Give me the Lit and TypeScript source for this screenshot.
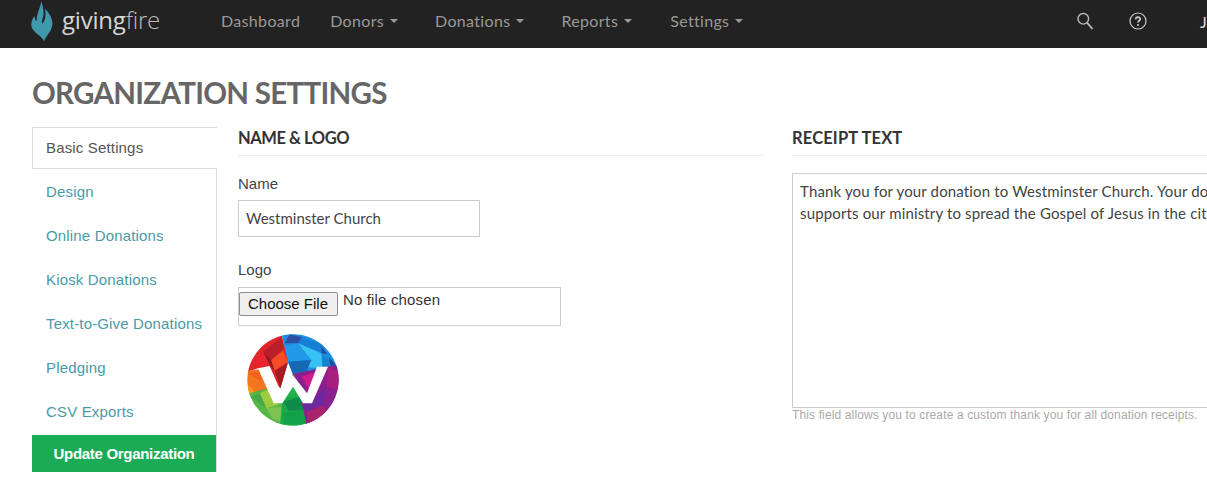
import { LitElement, html, css, svg } from "lit";
import { customElement } from "lit/decorators.js";

/* Logo facets, given in a 300x300 working space (see viewBox). */
const facets: [string, string][] = [
  // blue field
  ["#1a8fe0", "115,10 300,0 300,120 150,135 135,95"],
  ["#2c4fa6", "125,40 140,12 178,22 165,40"],
  ["#1780d6", "178,22 235,42 235,70 165,40"],
  ["#2199e6", "120,50 165,40 205,90 135,95"],
  ["#38c2f4", "165,40 235,70 238,115 195,112 205,90"],
  ["#1f4f9e", "235,45 252,72 235,70"],
  ["#1a80cc", "238,78 275,100 255,112 238,112"],
  ["#1a4fa0", "258,80 282,112 262,106"],
  ["#1668b4", "135,95 205,90 190,125 150,132"],
  // red field
  ["#e0262a", "0,0 115,10 135,95 112,175 45,115 0,130"],
  ["#b81f28", "60,65 115,22 122,55 85,90"],
  ["#8e1a22", "60,65 85,90 95,125 80,105"],
  ["#f64c24", "85,90 120,62 135,95 95,122"],
  ["#a31c24", "95,122 135,98 112,175"],
  ["#e8232e", "25,90 60,65 80,105 45,115"],
  // orange
  ["#f4761e", "0,125 48,118 92,210 0,200"],
  ["#f99a22", "15,165 42,192 10,192"],
  ["#f25f1e", "15,130 48,124 58,155"],
  // left green
  ["#58b548", "0,195 75,175 118,210 125,300 60,300"],
  ["#9ecb3e", "50,190 75,178 105,225 70,235"],
  ["#43a947", "22,200 50,190 70,235"],
  ["#7dc450", "70,235 115,230 125,278 88,266"],
  // centre green
  ["#1aa94a", "150,132 176,215 195,300 110,300 118,208"],
  ["#20b24c", "150,135 170,198 122,205"],
  ["#0d8b48", "120,215 175,200 182,240 138,242"],
  ["#12a048", "120,250 185,240 192,282 125,282"],
  // purple field
  ["#8a1f90", "150,132 300,100 300,190 250,262 190,282 176,215"],
  ["#d01a8c", "175,140 226,122 205,190"],
  ["#a72080", "255,110 290,124 286,180 250,170"],
  ["#6b2a9e", "176,215 205,215 250,170 240,225 190,245"],
  ["#a9246c", "190,245 240,228 258,262 195,280"],
];

@customElement("app-root")
export class AppRoot extends LitElement {
  static styles = css`
    :host {
      display: block;
      width: 1207px;
      height: 503px;
      overflow: hidden;
      background: #fff;
      font-family: "Liberation Sans", Arial, sans-serif;
      font-size: 15px;
      color: #444;
    }
    .top {
      height: 48px;
      background: #222;
      display: flex;
      align-items: center;
      position: relative;
      overflow: hidden;
    }
    .brand {
      display: flex;
      align-items: center;
      margin-left: 31px;
      width: 190px;
      flex: none;
      height: 48px;
    }
    .flame { display: block; margin-top: -6px; }
    .word {
      margin-left: 9px;
      margin-top: -10px;
      font: 400 24px "Open Sans", sans-serif;
      letter-spacing: -0.2px;
      color: #d6d6d6;
    }
    .word span { font-weight: 300; color: #bdbdbd; }
    .nav {
      display: flex;
      align-items: center;
      flex: 1;
      font: 400 16px Lato, sans-serif;
      letter-spacing: 0.33px;
      color: #999;
      margin-top: -8px;
    }
    .nav a { display: flex; align-items: center; flex: none; }
    .caret {
      margin-left: 6px;
      margin-top: 2px;
      border-left: 4.5px solid transparent;
      border-right: 4.5px solid transparent;
      border-top: 4px solid #999;
    }
    .icons { display: flex; align-items: center; flex: none; margin-top: -6px; }
    .icons svg { display: block; }
    .help-icon { margin-left: 35px; }
    .user { font: 400 16px Lato, sans-serif; color: #ddd; margin-left: 53px; width: 7px; }
    h1 {
      margin: 0;
      padding: 27px 0 0 32px;
      height: 52px;
      font: 700 29.5px/36px Lato, sans-serif;
      letter-spacing: -0.72px;
      color: #666;
      white-space: nowrap;
    }
    .grid {
      display: grid;
      grid-template-columns: 185px 526px 526px;
      column-gap: 21px;
      padding-left: 32px;
      width: max-content;
    }
    .side { display: flex; flex-direction: column; }
    .tab {
      height: 44px;
      flex: none;
      box-sizing: border-box;
      padding-left: 14px;
      display: flex;
      align-items: center;
      color: #4a9aa8;
      letter-spacing: 0.16px;
      border-right: 1px solid #ddd;
    }
    .tab.active {
      height: 42px;
      padding-bottom: 2px;
      color: #555;
      border: 1px solid #ddd;
      border-right: 0;
      padding-left: 13px;
    }
    .tab.last { height: 47px; padding-bottom: 3px; }
    .save {
      height: 37px;
      width: 185px;
      box-sizing: border-box;
      background: #1aab54;
      color: #fff;
      font: 700 15px "Liberation Sans", Arial, sans-serif;
      display: flex;
      align-items: center;
      justify-content: center;
      border: 0;
      border-right: 1px solid #ddd;
      padding: 0;
      margin-top: -1px;
      letter-spacing: -0.3px;
    }
    h2 {
      margin: 0;
      height: 28px;
      font: 700 16.5px/22px Lato, sans-serif;
      color: #333;
      border-bottom: 1px solid #eee;
    }
    .h-name { letter-spacing: -0.45px; }
    .h-receipt { letter-spacing: 0.15px; }
    label { display: block; line-height: 18px; color: #444; }
    .f-name { margin-top: 19px; }
    .input {
      box-sizing: border-box;
      width: 242px;
      height: 37px;
      margin-top: 7px;
      border: 1px solid #ccc;
      padding: 0 7px 2px 7px;
      display: block;
      font: 400 15px Lato, sans-serif;
      color: #444;
      outline: none;
    }
    .f-logo { margin-top: 24px; }
    .file {
      box-sizing: border-box;
      width: 323px;
      height: 39px;
      margin-top: 8px;
      border: 1px solid #ccc;
      display: flex;
      align-items: flex-start;
      padding: 4px 0 0 0;
    }
    .file button {
      box-sizing: border-box;
      width: 99px;
      height: 24px;
      padding: 0 1px 2px 0;
      font: 400 15px "Liberation Sans", Arial, sans-serif;
      color: #111;
      background: #efefef;
      border: 1px solid #8f8f8f;
      border-radius: 2px;
    }
    .file span {
      margin: -1px 0 0 5px;
      line-height: 17px;
      color: #333;
      font-size: 15px;
      letter-spacing: 0.15px;
    }
    .logo { display: block; margin: 8px 0 0 9px; filter: blur(0.4px); }
    .receipt { margin-left: 7px; }
    textarea {
      display: block;
      box-sizing: border-box;
      width: 526px;
      height: 235px;
      margin-top: 17px;
      border: 1px solid #ccc;
      padding: 6px 7px;
      font: 400 15px/22px Lato, sans-serif;
      letter-spacing: 0.15px;
      color: #444;
      resize: none;
      outline: none;
      overflow: hidden;
      white-space: pre;
    }
    .help { font-size: 12px; line-height: 14px; letter-spacing: 0.13px; color: #aaa; white-space: nowrap; }
  `;

  render() {
    const items: [string, number, boolean][] = [
      ["Dashboard", 30, false],
      ["Donors", 37, true],
      ["Donations", 37, true],
      ["Reports", 38, true],
      ["Settings", 0, true],
    ];
    return html`
      <header class="top">
        <div class="brand">
          <svg class="flame" width="22" height="42" viewBox="16 0 66 126">
            <path fill="#3f98ab" d="M47 3C50 18 56 28 53 48C50 58 48 64 50 72C58 62 62 50 58 26C70 38 82 55 80 75C78 95 62 105 55 124C48 108 28 100 19 85C14 72 18 60 26 48C28 58 30 62 33 64C32 42 44 25 47 3Z"/>
          </svg>
          <div class="word">giving<span>fire</span></div>
        </div>
        <nav class="nav">
          ${items.map(
            ([t, g, c]) => html`<a style="margin-right:${g}px">${t}${c ? html`<i class="caret"></i>` : ""}</a>`
          )}
        </nav>
        <div class="icons">
          <svg width="17" height="18" viewBox="0 0 17 18" fill="none" stroke="#bbb">
            <circle cx="6.300" cy="6.800" r="5.300" stroke-width="1.400"/>
            <path d="M10.200 10.800L15.500 17" stroke-width="1.800"/>
          </svg>
          <svg class="help-icon" width="18" height="18" viewBox="0 0 18 18" fill="none">
            <circle cx="9" cy="9" r="8" stroke="#ccc" stroke-width="1.200"/>
            <path d="M6.800 7.200C6.800 4.400 11.200 4.400 11.200 7.100C11.200 8.800 9 8.800 9 10.600" stroke="#ccc" stroke-width="1.800"/>
            <circle cx="9" cy="12.900" r="1" fill="#ccc"/>
          </svg>
          <span class="user">J</span>
        </div>
      </header>
      <h1>ORGANIZATION SETTINGS</h1>
      <div class="grid">
        <aside class="side">
          <div class="tab active">Basic Settings</div>
          <div class="tab">Design</div>
          <div class="tab">Online Donations</div>
          <div class="tab">Kiosk Donations</div>
          <div class="tab">Text-to-Give Donations</div>
          <div class="tab">Pledging</div>
          <div class="tab last">CSV Exports</div>
          <button class="save">Update Organization</button>
        </aside>
        <section>
          <h2 class="h-name">NAME &amp; LOGO</h2>
          <label class="f-name">Name</label>
          <input class="input" .value=${"Westminster Church"} />
          <label class="f-logo">Logo</label>
          <div class="file"><button>Choose File</button><span>No file chosen</span></div>
          <svg class="logo" width="92" height="92" viewBox="12 12 276 276">
            <defs><clipPath id="c"><circle cx="150" cy="150" r="137"/></clipPath></defs>
            <g clip-path="url(#c)">
              ${facets.map(([f, p]) => svg`<polygon fill=${f} points=${p}/>`)}
              <polygon fill="#fff" points="45,115 80,108 114,186 150,136 192,190 222,110 255,110 207,220 180,220 150,170 118,220 92,220"/>
            </g>
          </svg>
        </section>
        <section class="receipt">
          <h2 class="h-receipt">RECEIPT TEXT</h2>
          <textarea .value=${"Thank you for your donation to Westminster Church. Your donation\nsupports our ministry to spread the Gospel of Jesus in the city."}></textarea>
          <div class="help">This field allows you to create a custom thank you for all donation receipts.</div>
        </section>
      </div>
    `;
  }
}
